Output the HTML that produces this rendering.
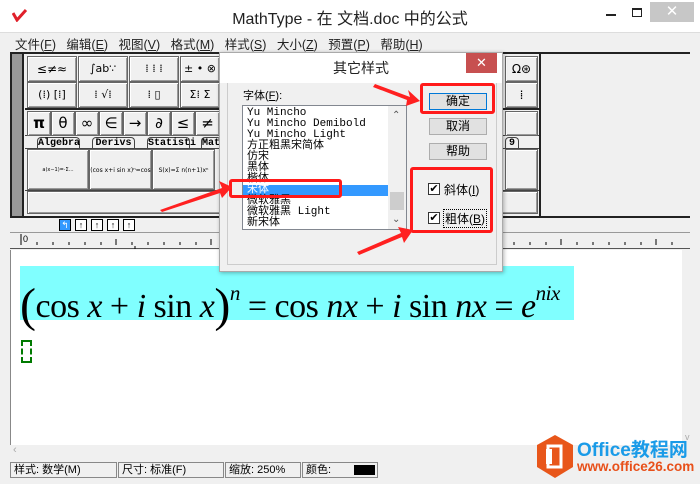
<!DOCTYPE html>
<html><head><meta charset="utf-8">
<style>
*{margin:0;padding:0;box-sizing:border-box}
body{width:700px;height:484px;overflow:hidden;background:#f0f0f0;font-family:"Liberation Sans","Noto Sans CJK SC",sans-serif;position:relative;font-size:12px;color:#000}
.a{position:absolute}
.sb{position:absolute;background:#f0f0f0;border:1px solid #666;box-shadow:inset 1px 1px #fff,inset -1px -1px #999;text-align:center;font-family:"DejaVu Sans",sans-serif}
.mono{font-family:"Liberation Mono","Noto Sans CJK SC",monospace}
.li{height:11px;line-height:11px;font-size:11px;padding-left:4px;white-space:nowrap}
.red{position:absolute;border:3px solid #ff1a1a;border-radius:3px}
.dbtn{position:absolute;left:429px;width:58px;height:17px;border:1px solid #adadad;background:#e1e1e1;text-align:center;font-size:12px;line-height:15px}
.tab{position:absolute;top:137px;height:12px;border:1px solid #444;border-bottom:none;border-radius:4px 4px 0 0;background:#f0f0f0;font-size:10px;line-height:11px;text-align:center;font-family:"Liberation Mono",monospace;font-weight:bold}
.st{position:absolute;top:462px;height:16px;border:1px solid #888;font-size:11px;line-height:14px;padding-left:3px;white-space:nowrap;overflow:hidden}
</style></head><body>
<div class="a" style="left:0;top:0;width:700px;height:32px;background:#fff"></div>
<svg class="a" style="left:12px;top:8px" width="16" height="14"><path d="M1 5 L5 12 L14 2" stroke="#e0202a" stroke-width="3" fill="none"/></svg>
<div class="a" style="left:0;top:5px;width:700px;text-align:center;font-size:16px;color:#222">MathType - 在 文档.doc 中的公式</div>
<div class="a" style="left:606px;top:14px;width:10px;height:2px;background:#222"></div>
<div class="a" style="left:632px;top:8px;width:10px;height:9px;border:1px solid #222;border-top-width:2px"></div>
<div class="a" style="left:650px;top:2px;width:44px;height:20px;background:#c7c7c7;color:#fff;text-align:center;font-size:15px;line-height:20px">✕</div>
<div class="a" style="left:0;top:32px;width:700px;height:20px;background:#f0f0f0;border-top:1px solid #ddd"></div>
<div class="a" style="left:15px;top:34px;font-size:12.5px;white-space:nowrap;color:#222">文件(<u>F</u>)&nbsp;&nbsp; 编辑(<u>E</u>)&nbsp;&nbsp; 视图(<u>V</u>)&nbsp;&nbsp; 格式(<u>M</u>)&nbsp;&nbsp; 样式(<u>S</u>)&nbsp;&nbsp; 大小(<u>Z</u>)&nbsp;&nbsp; 预置(<u>P</u>)&nbsp;&nbsp; 帮助(<u>H</u>)</div>
<div class="a" style="left:10px;top:52px;width:680px;height:166px;border:2px solid #222;background:#f0f0f0"></div>
<div class="a" style="left:12px;top:54px;width:12px;height:162px;background:#999;border-right:2px solid #222"></div>
<div class="a" style="left:539px;top:52px;width:151px;height:166px;background:#f0f0f0;border-left:2px solid #222;border-top:2px solid #222;border-bottom:2px solid #222"></div>
<div class="a" style="left:25px;top:54px;width:514px;height:56px;border-bottom:2px solid #222"></div>
<div class="sb" style="left:27px;top:56px;width:50px;height:26px;line-height:24px">≤≠≈</div>
<div class="sb" style="left:78px;top:56px;width:50px;height:26px;line-height:24px;font-size:11px">∫ab∵</div>
<div class="sb" style="left:129px;top:56px;width:50px;height:26px;line-height:24px;font-size:11px">⁞ ⁞ ⁞</div>
<div class="sb" style="left:180px;top:56px;width:40px;height:26px;line-height:24px;font-size:11px">± • ⊗</div>
<div class="sb" style="left:27px;top:82px;width:50px;height:26px;line-height:24px;font-size:11px">(⁞) [⁞]</div>
<div class="sb" style="left:78px;top:82px;width:50px;height:26px;line-height:24px;font-size:11px">⁞ √⁞</div>
<div class="sb" style="left:129px;top:82px;width:50px;height:26px;line-height:24px;font-size:11px">⁞ ▯</div>
<div class="sb" style="left:180px;top:82px;width:40px;height:26px;line-height:24px;font-size:11px">Σ⁞ Σ</div>
<div class="sb" style="left:505px;top:56px;width:33px;height:26px;line-height:24px;font-size:12px">Ω⊛</div>
<div class="sb" style="left:505px;top:82px;width:33px;height:26px;line-height:24px;font-size:12px">⁞</div>
<div class="a" style="left:25px;top:110px;width:514px;height:26px;border-bottom:1px solid #444"></div>
<div class="sb" style="left:27px;top:111px;width:24px;height:25px;line-height:23px;font-size:15px;font-weight:bold">π</div>
<div class="sb" style="left:51px;top:111px;width:24px;height:25px;line-height:23px;font-size:15px">θ</div>
<div class="sb" style="left:75px;top:111px;width:24px;height:25px;line-height:23px;font-size:15px">∞</div>
<div class="sb" style="left:99px;top:111px;width:24px;height:25px;line-height:23px;font-size:15px">∈</div>
<div class="sb" style="left:123px;top:111px;width:24px;height:25px;line-height:23px;font-size:15px">→</div>
<div class="sb" style="left:147px;top:111px;width:24px;height:25px;line-height:23px;font-size:15px">∂</div>
<div class="sb" style="left:171px;top:111px;width:24px;height:25px;line-height:23px;font-size:15px">≤</div>
<div class="sb" style="left:195px;top:111px;width:25px;height:25px;line-height:23px;font-size:15px">≠</div>
<div class="sb" style="left:505px;top:111px;width:33px;height:25px"></div>
<div class="tab" style="left:37px;width:43px">Algebra</div>
<div class="tab" style="left:92px;width:43px">Derivs</div>
<div class="tab" style="left:147px;width:43px">Statisti</div>
<div class="tab" style="left:201px;width:20px">Mat</div>
<div class="tab" style="left:505px;width:14px">9</div>
<div class="a" style="left:25px;top:148px;width:514px;height:43px;border-top:1px solid #444;border-bottom:1px solid #444"></div>
<div class="sb" style="left:27px;top:149px;width:62px;height:41px;font-size:5px;line-height:41px">a(x−1)=·Σ…</div>
<div class="sb" style="left:89px;top:149px;width:63px;height:41px;font-size:6px;line-height:41px">(cos x+i sin x)ⁿ=cos</div>
<div class="sb" style="left:152px;top:149px;width:63px;height:41px;font-size:6px;line-height:41px">S(x)=Σ n(n+1)xⁿ</div>
<div class="sb" style="left:505px;top:149px;width:33px;height:41px"></div>
<div class="sb" style="left:27px;top:191px;width:511px;height:23px"></div>
<div class="a" style="left:59px;top:219px;width:12px;height:12px;background:#3399ff;border:1px solid #000;color:#fff;font-size:9px;line-height:10px;text-align:center">↰</div>
<div class="a" style="left:75px;top:219px;width:12px;height:12px;background:#fff;border:1px solid #000;font-size:9px;line-height:10px;text-align:center">↑</div>
<div class="a" style="left:91px;top:219px;width:12px;height:12px;background:#fff;border:1px solid #000;font-size:9px;line-height:10px;text-align:center">↑</div>
<div class="a" style="left:107px;top:219px;width:12px;height:12px;background:#fff;border:1px solid #000;font-size:9px;line-height:10px;text-align:center">↑</div>
<div class="a" style="left:123px;top:219px;width:12px;height:12px;background:#fff;border:1px solid #000;font-size:9px;line-height:10px;text-align:center">↑</div>
<div class="a" style="left:10px;top:232px;width:680px;height:17px;background:#f0f0f0;border-top:1px solid #999;border-bottom:1px solid #555"></div>
<svg class="a" style="left:10px;top:232px" width="680" height="18">
<line x1="11" y1="2" x2="11" y2="13" stroke="#000"/>
<text x="13" y="10" font-size="9" font-family="Liberation Sans">0</text>
<g stroke="#000">
<line x1="27" y1="10" x2="27" y2="13"/><line x1="43" y1="10" x2="43" y2="13"/><line x1="59" y1="10" x2="59" y2="13"/><line x1="75" y1="10" x2="75" y2="13"/><line x1="91" y1="10" x2="91" y2="13"/><line x1="106" y1="7" x2="106" y2="13"/><line x1="122" y1="10" x2="122" y2="13"/><line x1="138" y1="10" x2="138" y2="13"/><line x1="154" y1="10" x2="154" y2="13"/><line x1="170" y1="10" x2="170" y2="13"/><line x1="186" y1="10" x2="186" y2="13"/><line x1="201" y1="7" x2="201" y2="13"/>
<line x1="504" y1="10" x2="504" y2="13"/><line x1="520" y1="10" x2="520" y2="13"/><line x1="536" y1="10" x2="536" y2="13"/><line x1="551" y1="7" x2="551" y2="13"/><line x1="567" y1="10" x2="567" y2="13"/><line x1="583" y1="10" x2="583" y2="13"/><line x1="599" y1="10" x2="599" y2="13"/><line x1="615" y1="10" x2="615" y2="13"/><line x1="631" y1="10" x2="631" y2="13"/><line x1="646" y1="7" x2="646" y2="13"/><line x1="662" y1="10" x2="662" y2="13"/><line x1="125" y1="14" x2="125" y2="17"/><line x1="262" y1="14" x2="262" y2="17"/></g></svg>
<div class="a" style="left:10px;top:250px;width:672px;height:195px;background:#fff;border-left:1px solid #888"></div>
<div class="a" style="left:682px;top:250px;width:14px;height:195px;background:#f0f0f0"></div>
<div class="a" style="left:685px;top:432px;font-size:9px;color:#aaa">v</div>
<div class="a" style="left:10px;top:445px;width:686px;height:15px;background:#f0f0f0"></div>
<div class="a" style="left:13px;top:444px;font-size:11px;color:#aaa">‹</div>
<div class="a" style="left:20px;top:266px;width:554px;height:54px;background:#80ffff"></div>
<div class="a" style="left:20px;top:266px;height:54px;line-height:54px;font-family:'Liberation Serif',serif;font-size:34px;white-space:nowrap;letter-spacing:-0.5px"><span style="font-size:48px;vertical-align:-4px">(</span>cos <i>x</i> + <i>i</i> sin <i>x</i><span style="font-size:48px;vertical-align:-4px">)</span><sup style="font-size:21px;vertical-align:17px"><i>n</i></sup> = cos <i>nx</i> + <i>i</i> sin <i>nx</i> = <i>e</i><sup style="font-size:21px;vertical-align:17px"><i>nix</i></sup></div>
<div class="a" style="left:21px;top:340px;width:11px;height:23px;border:2px dashed #007a00"></div>
<div class="a" style="left:10px;top:461px;width:690px;height:17px;background:#f0f0f0"></div>
<div class="st" style="left:10px;width:107px">样式: 数学(M)</div>
<div class="st" style="left:118px;width:106px">尺寸: 标准(F)</div>
<div class="st" style="left:225px;width:76px">缩放: 250%</div>
<div class="st" style="left:302px;width:76px">颜色:</div>
<div class="a" style="left:354px;top:465px;width:21px;height:10px;background:#000"></div>
<div class="a" style="left:219px;top:52px;width:284px;height:220px;background:#f0f0f0;border:1px solid #aaa;box-shadow:1px 1px 4px rgba(0,0,0,.3)"></div>
<div class="a" style="left:220px;top:53px;width:282px;height:30px;background:#fff"></div>
<div class="a" style="left:220px;top:58px;width:282px;text-align:center;font-size:14px;color:#222">其它样式</div>
<div class="a" style="left:466px;top:53px;width:31px;height:20px;background:#c75050;color:#fff;text-align:center;font-size:13px;line-height:20px">✕</div>
<div class="a" style="left:227px;top:83px;width:270px;height:182px;border:1px solid #ccc;border-top:none"></div>
<div class="a" style="left:243px;top:87px;font-size:11px">字体(<u>F</u>):</div>
<div class="a" style="left:242px;top:105px;width:165px;height:125px;background:#fff;border:1px solid #828790;overflow:hidden">
<div style="height:2px"></div>
<div class="li mono">Yu Mincho</div>
<div class="li mono">Yu Mincho Demibold</div>
<div class="li mono">Yu Mincho Light</div>
<div class="li mono">方正粗黑宋简体</div>
<div class="li mono">仿宋</div>
<div class="li mono">黑体</div>
<div class="li mono">楷体</div>
<div class="li mono" style="background:#3399ff;color:#fff;width:145px">宋体</div>
<div class="li mono">微软雅黑</div>
<div class="li mono">微软雅黑 Light</div>
<div class="li mono">新宋体</div>
</div>
<div class="a" style="left:388px;top:106px;width:18px;height:123px;background:#f0f0f0"></div>
<div class="a" style="left:390px;top:192px;width:14px;height:18px;background:#cdcdcd"></div>
<div class="a" style="left:392px;top:110px;font-size:10px;color:#555">⌃</div>
<div class="a" style="left:392px;top:214px;font-size:10px;color:#555">⌄</div>
<div class="dbtn" style="top:93px;border-color:#0078d7">确定</div>
<div class="dbtn" style="top:118px">取消</div>
<div class="dbtn" style="top:143px">帮助</div>
<div class="a" style="left:428px;top:183px;width:12px;height:12px;background:#fff;border:1px solid #333;font-size:11px;line-height:10px;text-align:center">✔</div>
<div class="a" style="left:444px;top:181px;font-size:12px">斜体(<u>I</u>)</div>
<div class="a" style="left:428px;top:212px;width:12px;height:12px;background:#fff;border:1px solid #333;font-size:11px;line-height:10px;text-align:center">✔</div>
<div class="a" style="left:443px;top:209px;font-size:12px;border:1px dotted #000;padding:0 1px">粗体(<u>B</u>)</div>
<div class="red" style="left:420px;top:83px;width:75px;height:31px"></div>
<div class="red" style="left:410px;top:167px;width:83px;height:66px"></div>
<div class="red" style="left:229px;top:179px;width:113px;height:19px"></div>
<svg class="a" style="left:0;top:0" width="700" height="484">
<polygon points="160,210 222,188 219,181 232,187 222,198 220,193 162,212" fill="#ff2020"/>
<polygon points="375,84 410,97 408,90 420,101 406,106 407,100 373,87" fill="#ff2020"/>
<polygon points="357,252 401,233 398,227 413,230 404,243 402,237 359,255" fill="#ff2020"/>
</svg>
<svg class="a" style="left:535px;top:434px" width="40" height="45"><polygon points="20,1 38,11 38,33 20,44 2,33 2,11" fill="#e8561a"/><rect x="13" y="12" width="13" height="21" fill="none" stroke="#fff" stroke-width="3"/><rect x="11" y="15" width="6" height="15" fill="#fff"/></svg>
<div class="a" style="left:577px;top:435px;font-size:19px;font-weight:bold;color:#1a9be8;white-space:nowrap">Office教程网</div>
<div class="a" style="left:577px;top:459px;font-size:13.5px;font-weight:bold;color:#e8501a;white-space:nowrap">www.office26.com</div>
</body></html>
